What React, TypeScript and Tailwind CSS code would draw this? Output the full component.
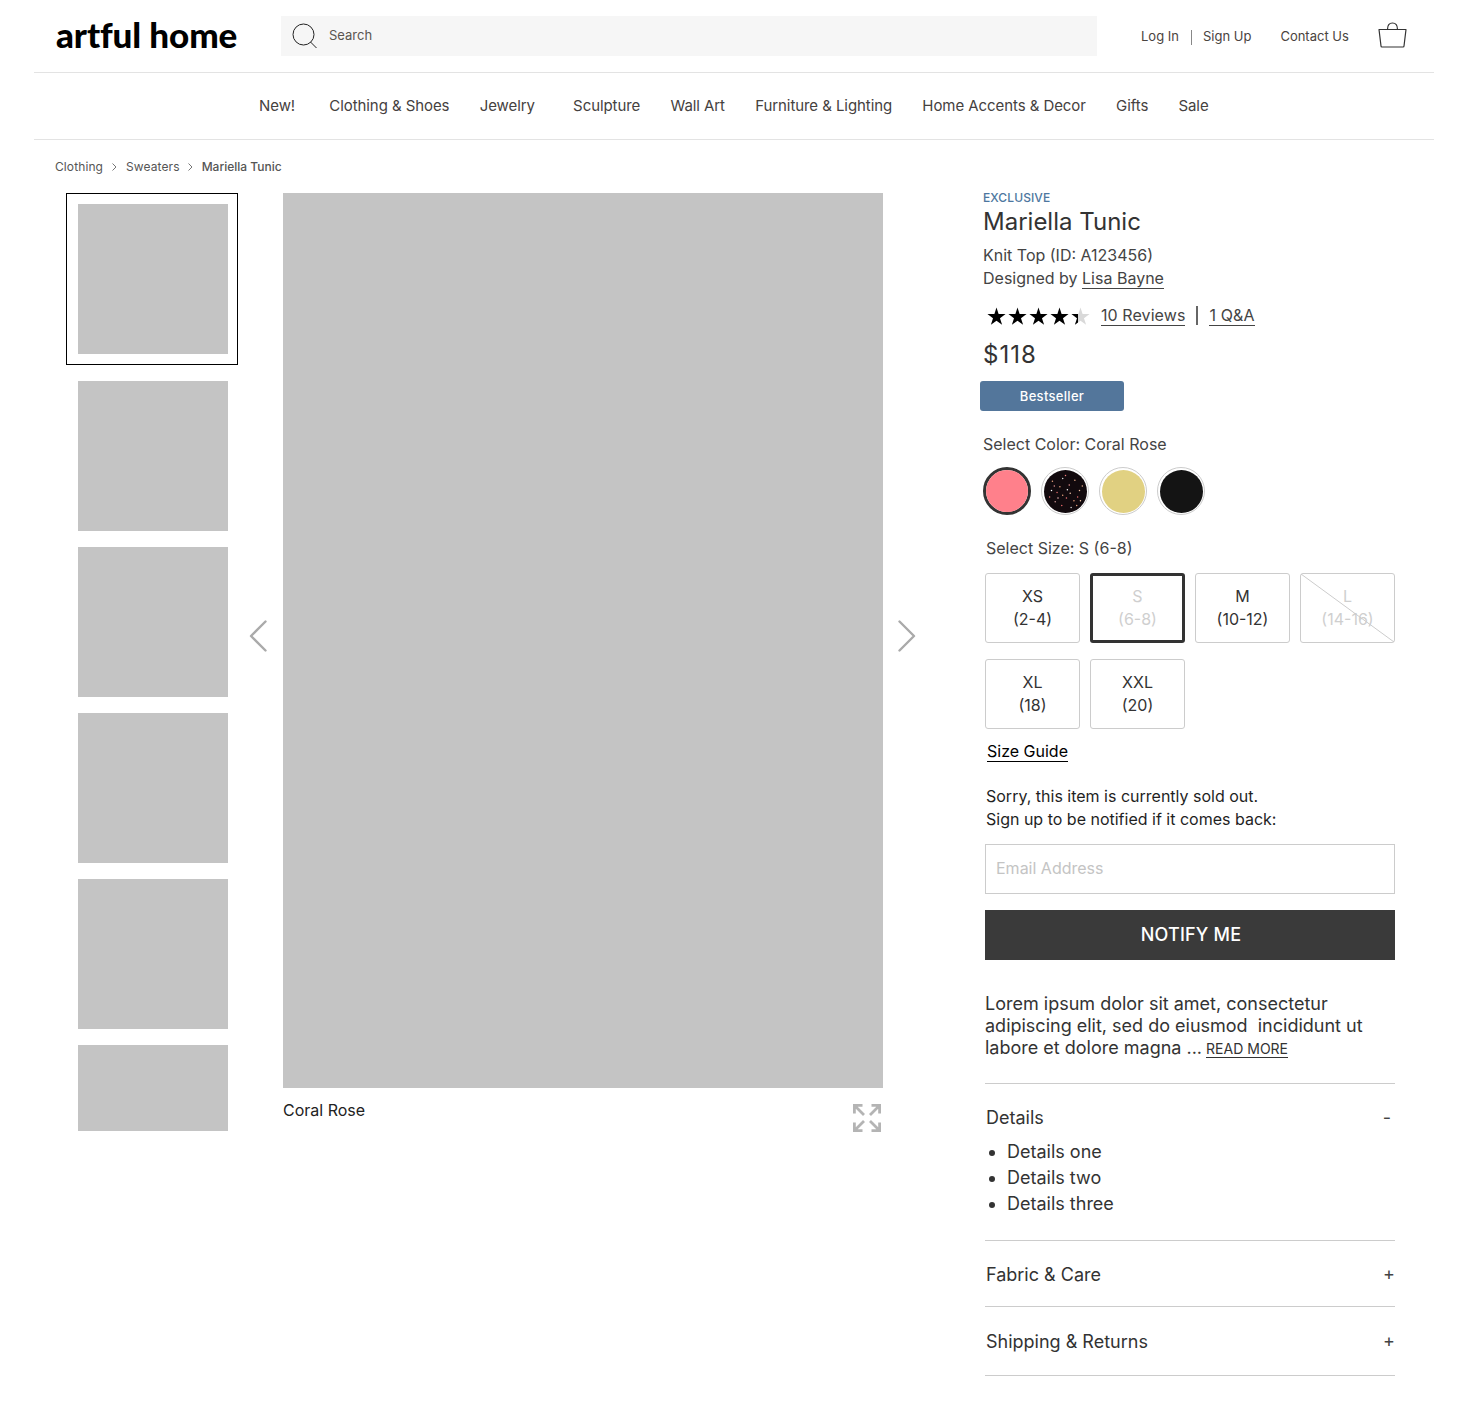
const navItems = [
  { label: 'New!', cls: '' },
  { label: 'Clothing & Shoes', cls: 'ml-[4px]' },
  { label: 'Jewelry', cls: '' },
  { label: 'Sculpture', cls: 'ml-[8px]' },
  { label: 'Wall Art', cls: '' },
  { label: 'Furniture & Lighting', cls: '' },
  { label: 'Home Accents & Decor', cls: '' },
  { label: 'Gifts', cls: '' },
  { label: 'Sale', cls: '' },
];

const thumbs = ['h-[150px]', 'h-[150px]', 'h-[150px]', 'h-[150px]', 'h-[86px]'];

const specks = [
  [9, 12, '#e8a27c'], [14, 24, '#e06b6b'], [20, 9, '#d9d9d9'], [27, 16, '#f09a9a'], [33, 11, '#e9b08c'],
  [38, 22, '#f0c0a0'], [24, 30, '#f07a7a'], [12, 34, '#d9a0a0'], [32, 33, '#f0a27c'], [19, 38, '#e96b6b'],
  [8, 22, '#ffffff'], [28, 25, '#ffd0b0'], [36, 29, '#e96b6b'], [17, 18, '#e8a27c'], [29, 40, '#d9d9d9'],
  [23, 6, '#f07a7a'], [41, 17, '#e9b08c'], [6, 29, '#f07a7a'], [15, 30, '#ffc0c0'], [25, 21, '#ffffff'],
  [35, 38, '#e8a27c'], [11, 17, '#f09a9a'], [39, 33, '#ffd0b0'], [20, 27, '#e8a27c'],
] as const;

function Star({ half }: { half?: boolean }) {
  const pts = '9,0.5 11,6.7 17.6,6.7 12.3,10.6 14.3,16.8 9,12.9 3.7,16.8 5.7,10.6 0.4,6.7 7,6.7';
  return (
    <svg width="21" height="18" viewBox="0 0 19.9 17" aria-hidden="true">
      <defs>
        <clipPath id="half-star">
          <rect x="0" y="0" width="6.6" height="18" />
        </clipPath>
      </defs>
      <polygon points={pts} fill={half ? '#d9d9d9' : '#000000'} />
      {half && <polygon points={pts} fill="#000000" clipPath="url(#half-star)" />}
    </svg>
  );
}

function SizeBox({ top, bottom, state }: { top: string; bottom: string; state?: 'selected' | 'sold' }) {
  const border =
    state === 'selected'
      ? 'border-[3px] border-[#333333] rounded-[3px]'
      : 'border border-[#cccccc] rounded-[3px]';
  const text = state ? 'text-[#cfcfcf]' : 'text-[#333333]';
  return (
    <div className={`relative flex h-[70px] w-[95px] flex-col items-center justify-center text-[16px] leading-[23px] ${border} ${text}`}>
      <span>{top}</span>
      <span>{bottom}</span>
      {state === 'sold' && (
        <svg className="absolute inset-0 h-full w-full" viewBox="0 0 93 68" preserveAspectRatio="none" aria-hidden="true">
          <line x1="0" y1="0" x2="93" y2="68" stroke="#cccccc" strokeWidth="1" />
        </svg>
      )}
    </div>
  );
}

function Swatch({ selected, color, speckled }: { selected?: boolean; color: string; speckled?: boolean }) {
  return (
    <div
      className={`flex h-[48px] w-[48px] items-center justify-center rounded-full ${
        selected ? 'border-[3px] border-[#333333]' : 'border border-[#cccccc]'
      }`}
    >
      <div
        className={`${selected ? 'h-[42px] w-[42px]' : 'h-[43px] w-[43px]'} overflow-hidden rounded-full`}
        style={{ backgroundColor: color }}
      >
        {speckled && (
          <svg width="43" height="43" viewBox="0 0 46 46" aria-hidden="true">
            {specks.map(([x, y, c], i) => (
              <circle key={i} cx={x} cy={y} r="0.8" fill={c} />
            ))}
          </svg>
        )}
      </div>
    </div>
  );
}

function Chevron({ left }: { left?: boolean }) {
  return (
    <svg width="18" height="32" viewBox="0 0 18 32" fill="none" aria-hidden="true">
      <path
        d={left ? 'M16.5 1.5 L2 16 L16.5 30.5' : 'M1.5 1.5 L16 16 L1.5 30.5'}
        stroke="#aaaaaa"
        strokeWidth="2.4"
        strokeLinecap="round"
        strokeLinejoin="round"
      />
    </svg>
  );
}

export default function App() {
  return (
    <div className="min-h-[1414px] bg-white font-['Inter',sans-serif] text-[#333333]">
      <div className="mx-auto w-[1400px]">
        {/* top bar */}
        <header className="flex h-[73px] items-center border-b border-[#e3e3e3] pl-[22px]">
          <div className="w-[225px] -translate-y-[2px] font-['Lato',sans-serif] text-[35px] leading-none font-black tracking-[-0.1px] text-black">
            artful home
          </div>
          <div className="flex h-[40px] w-[816px] items-center bg-[#f6f6f6] pl-[11px]">
            <svg width="26" height="26" viewBox="0 0 26 26" fill="none" aria-hidden="true">
              <circle cx="11.5" cy="11.5" r="10.5" stroke="#222222" strokeWidth="1" />
              <path d="M18.5 19 L24.5 25" stroke="#222222" strokeWidth="1" />
            </svg>
            <span className="ml-[11px] text-[13px] text-[#5a5550]">Search</span>
          </div>
          <div className="ml-[44px] flex translate-y-[1px] items-center text-[13px] font-normal text-[#4a4440]">
            <span>Log In</span>
            <span className="mr-[11px] ml-[12px] h-[15px] w-px bg-[#888888]" />
            <span>Sign Up</span>
            <span className="ml-[29px]">Contact Us</span>
          </div>
          <svg className="ml-[29px] -translate-y-[1px]" width="29" height="26" viewBox="0 0 29 26" fill="none" aria-hidden="true">
            <path d="M1 7.5 H28 L26 24 Q26 25 25 25 H4 Q3 25 3 24 Z" stroke="#333333" strokeWidth="1.2" strokeLinejoin="round" />
            <path d="M9.5 7.5 Q9.5 1 14.5 1 Q19.5 1 19.5 7.5" stroke="#333333" strokeWidth="1.2" />
          </svg>
        </header>

        {/* nav */}
        <nav className="flex h-[67px] items-center border-b border-[#e3e3e3] pl-[225px] text-[15px] tracking-[-0.07px] text-[#454140]">
          {navItems.map((item) => (
            <span key={item.label} className={`mr-[30.2px] ${item.cls}`}>
              {item.label}
            </span>
          ))}
        </nav>

        {/* breadcrumbs */}
        <div className="flex h-[53px] items-center pl-[21px] text-[12px] tracking-[0.1px] text-[#555555]">
          <span>Clothing</span>
          <span className="mx-[9px]">
            <svg width="5" height="8" viewBox="0 0 5 8" fill="none" aria-hidden="true">
              <path d="M0.5 0.5 L4 4 L0.5 7.5" stroke="#666666" strokeWidth="0.9" />
            </svg>
          </span>
          <span>Sweaters</span>
          <span className="mr-[9px] ml-[8px]">
            <svg width="5" height="8" viewBox="0 0 5 8" fill="none" aria-hidden="true">
              <path d="M0.5 0.5 L4 4 L0.5 7.5" stroke="#666666" strokeWidth="0.9" />
            </svg>
          </span>
          <span className="font-medium tracking-normal">Mariella Tunic</span>
        </div>

        <main className="flex items-start pl-[32px]">
          {/* thumbnails */}
          <div className="flex w-[172px] flex-col gap-[16px]">
            <div className="h-[172px] w-[172px] border border-black pt-[10px] pl-[11px]">
              <div className="h-[150px] w-[150px] bg-[#c4c4c4]" />
            </div>
            {thumbs.map((h, i) => (
              <div key={i} className={`${h} ml-[12px] w-[150px] bg-[#c4c4c4]`} />
            ))}
          </div>

          {/* gallery */}
          <div className="flex h-[895px] w-[45px] items-center pb-[10px] pl-[11px]">
            <Chevron left />
          </div>
          <div className="w-[600px]">
            <div className="h-[895px] bg-[#c4c4c4]" />
            <div className="flex items-start justify-between pt-[11px] pr-[2px]">
              <span className="text-[16px] leading-[23px] text-[#222222]">Coral Rose</span>
              <svg className="mt-[5px]" width="28" height="28" viewBox="0 0 28 28" fill="none" aria-hidden="true">
                <g stroke="#b4b4b4" strokeWidth="2.8">
                  <path d="M1.4 9.5 V1.4 H9.5 M2 2 L11 11" />
                  <path d="M26.6 9.5 V1.4 H18.5 M26 2 L17 11" />
                  <path d="M1.4 18.5 V26.6 H9.5 M2 26 L11 17" />
                  <path d="M26.6 18.5 V26.6 H18.5 M26 26 L17 17" />
                </g>
              </svg>
            </div>
          </div>
          <div className="flex h-[895px] w-[100px] items-center pb-[10px] pl-[15px]">
            <Chevron />
          </div>

          {/* product panel */}
          <section className="w-[412px]">
            <div className="text-[12px] leading-[10px] font-medium tracking-[0.1px] text-[#4d77a0]">EXCLUSIVE</div>
            <h1 className="mt-[3px] text-[24px] leading-[32px] font-normal text-[#333333]">Mariella Tunic</h1>
            <div className="mt-[6px] text-[16px] leading-[23px] text-[#444444]">Knit Top (ID: A123456)</div>
            <div className="text-[16px] leading-[23px] text-[#444444]">
              Designed by <span className="border-b border-[#444444]">Lisa Bayne</span>
            </div>
            <div className="mt-[14px] flex h-[23px] items-center pl-[4px] text-[16px] text-[#444444]">
              <Star />
              <Star />
              <Star />
              <Star />
              <Star half />
              <span className="ml-[9px] border-b border-[#444444] leading-[20px] tracking-[0.08px]">10 Reviews</span>
              <span className="mx-[11px] h-[19px] w-[2px] bg-[#666666]" />
              <span className="border-b border-[#444444] leading-[20px] tracking-[0.1px]">1 Q&amp;A</span>
            </div>
            <div className="mt-[12px] text-[24px] leading-[32px] font-normal tracking-[1px] text-[#333333]">$118</div>
            <div className="-ml-[3px] mt-[10px] flex h-[30px] w-[144px] items-center justify-center rounded-[3px] bg-[#53769b] pt-[1px] text-[13px] font-medium tracking-[0.3px] text-white">
              Bestseller
            </div>
            <div className="mt-[22px] text-[16px] leading-[23px] text-[#444444]">Select Color: Coral Rose</div>
            <div className="mt-[11px] flex gap-[10px]">
              <Swatch selected color="#ff808b" />
              <Swatch color="#120a0e" speckled />
              <Swatch color="#e1d182" />
              <Swatch color="#141414" />
            </div>

            <div className="pl-[2px]">
              <div className="mt-[22px] pl-[1px] text-[16px] leading-[23px] text-[#444444]">Select Size: S (6-8)</div>
              <div className="mt-[13px] flex w-[410px] flex-wrap gap-x-[10px] gap-y-[16px]">
                <SizeBox top="XS" bottom="(2-4)" />
                <SizeBox top="S" bottom="(6-8)" state="selected" />
                <SizeBox top="M" bottom="(10-12)" />
                <SizeBox top="L" bottom="(14-16)" state="sold" />
                <SizeBox top="XL" bottom="(18)" />
                <SizeBox top="XXL" bottom="(20)" />
              </div>
              <div className="mt-[11px] pl-[2px] text-[16px] leading-[23px] text-black">
                <span className="border-b border-black">Size Guide</span>
              </div>
              <div className="mt-[22px] pl-[1px] text-[16px] leading-[23px] text-[#1f1f1f]">
                <div>Sorry, this item is currently sold out.</div>
                <div>Sign up to be notified if it comes back:</div>
              </div>
              <div className="mt-[13px] flex h-[50px] w-[410px] items-center border border-[#cccccc] pb-[2px] pl-[10px] text-[16px] text-[#c4c4c4]">
                Email Address
              </div>
              <div className="mt-[16px] flex h-[50px] w-[410px] items-center justify-center bg-[#3a3a3a] pb-[2px] pl-[2px] text-[18px] font-medium tracking-[0.2px] text-white">
                NOTIFY ME
              </div>
              <p className="mt-[33px] w-[410px] text-[18px] leading-[22px] text-[#333333]">
                Lorem ipsum dolor sit amet, consectetur adipiscing elit, sed do eiusmod&nbsp; incididunt ut labore et
                dolore magna ... <span className="-ml-[1px] border-b border-[#333333] text-[14px]">READ MORE</span>
              </p>

              <div className="mt-[23px] w-[410px] border-t border-[#cccccc]">
                <div className="flex items-center justify-between pt-[22px] pr-[4px] pl-px text-[18px] leading-[23px]">
                  <span>Details</span>
                  <span className="text-[18px] text-[#444444]">-</span>
                </div>
                <ul className="mt-[10px] list-disc pb-[23px] pl-[22px] text-[18px] leading-[26px]">
                  <li>Details one</li>
                  <li>Details two</li>
                  <li>Details three</li>
                </ul>
              </div>
              <div className="flex h-[66px] w-[410px] items-center justify-between border-t border-[#cccccc] pt-px pl-px text-[18px]">
                <span>Fabric &amp; Care</span>
                <span className="-translate-y-px text-[18px] text-[#444444]">+</span>
              </div>
              <div className="flex h-[70px] w-[410px] items-center justify-between border-y border-[#cccccc] pl-px text-[18px]">
                <span>Shipping &amp; Returns</span>
                <span className="-translate-y-px text-[18px] text-[#444444]">+</span>
              </div>
            </div>
          </section>
        </main>
      </div>
    </div>
  );
}
